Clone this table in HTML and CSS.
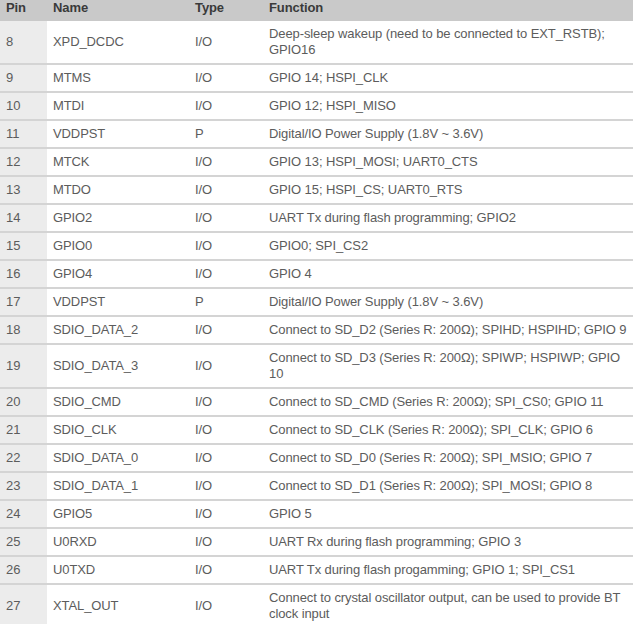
FILE: index.html
```html
<!DOCTYPE html>
<html>
<head>
<meta charset="utf-8">
<link rel="stylesheet" href="styles.css">
</head>
<body>
<table class="pins">
  <colgroup>
    <col class="c-pin"><col class="c-name"><col class="c-type"><col class="c-func">
  </colgroup>
  <thead>
    <tr><th>Pin</th><th>Name</th><th>Type</th><th>Function</th></tr>
  </thead>
  <tbody>
    <tr><td>8</td><td>XPD_DCDC</td><td>I/O</td><td class="func">Deep-sleep wakeup (need to be connected to EXT_RSTB);<br>GPIO16</td></tr>
    <tr><td>9</td><td>MTMS</td><td>I/O</td><td class="func">GPIO 14; HSPI_CLK</td></tr>
    <tr><td>10</td><td>MTDI</td><td>I/O</td><td class="func">GPIO 12; HSPI_MISO</td></tr>
    <tr><td>11</td><td>VDDPST</td><td>P</td><td class="func">Digital/IO Power Supply (1.8V ~ 3.6V)</td></tr>
    <tr><td>12</td><td>MTCK</td><td>I/O</td><td class="func">GPIO 13; HSPI_MOSI; UART0_CTS</td></tr>
    <tr><td>13</td><td>MTDO</td><td>I/O</td><td class="func">GPIO 15; HSPI_CS; UART0_RTS</td></tr>
    <tr><td>14</td><td>GPIO2</td><td>I/O</td><td class="func">UART Tx during flash programming; GPIO2</td></tr>
    <tr><td>15</td><td>GPIO0</td><td>I/O</td><td class="func">GPIO0; SPI_CS2</td></tr>
    <tr><td>16</td><td>GPIO4</td><td>I/O</td><td class="func">GPIO 4</td></tr>
    <tr><td>17</td><td>VDDPST</td><td>P</td><td class="func">Digital/IO Power Supply (1.8V ~ 3.6V)</td></tr>
    <tr><td>18</td><td>SDIO_DATA_2</td><td>I/O</td><td class="func">Connect to SD_D2 (Series R: 200Ω); SPIHD; HSPIHD; GPIO 9</td></tr>
    <tr><td>19</td><td>SDIO_DATA_3</td><td>I/O</td><td class="func">Connect to SD_D3 (Series R: 200Ω); SPIWP; HSPIWP; GPIO<br>10</td></tr>
    <tr><td>20</td><td>SDIO_CMD</td><td>I/O</td><td class="func">Connect to SD_CMD (Series R: 200Ω); SPI_CS0; GPIO 11</td></tr>
    <tr><td>21</td><td>SDIO_CLK</td><td>I/O</td><td class="func">Connect to SD_CLK (Series R: 200Ω); SPI_CLK; GPIO 6</td></tr>
    <tr><td>22</td><td>SDIO_DATA_0</td><td>I/O</td><td class="func">Connect to SD_D0 (Series R: 200Ω); SPI_MSIO; GPIO 7</td></tr>
    <tr><td>23</td><td>SDIO_DATA_1</td><td>I/O</td><td class="func">Connect to SD_D1 (Series R: 200Ω); SPI_MOSI; GPIO 8</td></tr>
    <tr><td>24</td><td>GPIO5</td><td>I/O</td><td class="func">GPIO 5</td></tr>
    <tr><td>25</td><td>U0RXD</td><td>I/O</td><td class="func">UART Rx during flash programming; GPIO 3</td></tr>
    <tr><td>26</td><td>U0TXD</td><td>I/O</td><td class="func">UART Tx during flash progamming; GPIO 1; SPI_CS1</td></tr>
    <tr><td>27</td><td>XTAL_OUT</td><td>I/O</td><td class="func">Connect to crystal oscillator output, can be used to provide BT<br>clock input</td></tr>
  </tbody>
</table>
</body>
</html>
```
FILE: styles.css
```css
html, body {
  margin: 0;
  padding: 0;
  background: #ffffff;
}
.pins {
  width: 633px;
  border-collapse: collapse;
  table-layout: fixed;
  font-family: "Liberation Sans", Arial, sans-serif;
  font-size: 13px;
  letter-spacing: -0.1px;
  color: #5c5c5c;
}
.c-pin { width: 47px; }
.c-name { width: 142px; }
.c-type { width: 74px; }
.c-func { width: 370px; }
.pins th {
  background: #c9c9c9;
  color: #3a3a3a;
  font-weight: bold;
  text-align: left;
  height: 21px;
  padding: 0 6px 5px 6px;
  line-height: 16px;
  box-sizing: border-box;
  vertical-align: top;
}
.pins td {
  padding: 5px 6px;
  line-height: 16px;
  vertical-align: middle;
  border-bottom: 2px solid #d4d4d4;
}
.pins td:first-child {
  background: #ececec;
}
.pins td.func {
  white-space: nowrap;
  overflow: visible;
}
```
